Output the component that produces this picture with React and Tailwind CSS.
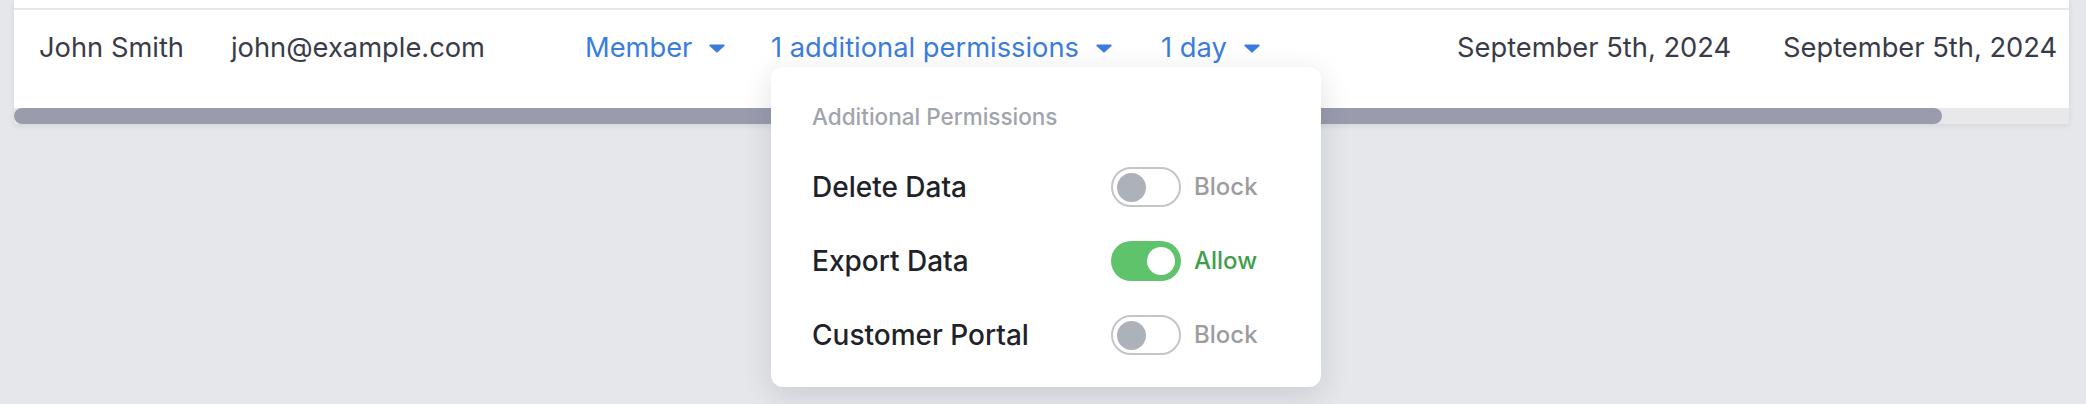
import React from 'react';

const permissions = [
  {label: 'Delete Data', on: false},
  {label: 'Export Data', on: true},
  {label: 'Customer Portal', on: false},
];

const Caret = () => (
  <svg width="16" height="9" viewBox="0 0 16 9" className="shrink-0">
    <path d="M1.2 0.5h13.6a0.9 0.9 0 0 1 0.65 1.5L8.65 8.3a0.9 0.9 0 0 1-1.3 0L0.55 2A0.9 0.9 0 0 1 1.2 0.5z" fill="currentColor"/>
  </svg>
);

const Toggle = ({on}) => (
  <div
    className={
      on
        ? 'flex h-[40px] w-[70px] shrink-0 items-center justify-end rounded-full bg-[#5ec36b] pr-[6px]'
        : 'flex h-[40px] w-[70px] shrink-0 items-center rounded-full border-2 border-[#c3c5c9] bg-white pl-[4px]'
    }
  >
    <div className={on ? 'h-[28px] w-[28px] rounded-full bg-white' : 'h-[29px] w-[29px] rounded-full bg-[#adb1b9]'}/>
  </div>
);

const Dropdown = ({children}) => (
  <div className="flex items-center gap-[17px] text-[#3b7ddd]">
    <span>{children}</span>
    <Caret/>
  </div>
);

export default function App() {
  return (
    <div className="min-h-[404px] bg-[#e5e7eb] font-['Inter',sans-serif]">
      {/* Table */}
      <div className="ml-[14px] mr-[17px] bg-white shadow-[0_2px_6px_rgba(0,0,0,0.08)]">
        <div className="h-[8px]"/>
        <div className="flex h-[78px] items-center whitespace-nowrap border-t-2 border-[#e5e7eb] text-[27.3px] leading-[32px] text-[#393c48]">
          <div className="w-[193px] shrink-0 pl-[25px]">John Smith</div>
          <div className="w-[354px] shrink-0 pl-[24px]">john@example.com</div>
          <div className="w-[186px] shrink-0 pl-[24px]">
            <Dropdown>Member</Dropdown>
          </div>
          <div className="w-[390px] shrink-0 pl-[24px]">
            <div className="relative">
              <Dropdown>1 additional permissions</Dropdown>

              {/* Permissions popover */}
              <div className="absolute left-0 top-[35px] z-10 w-[550px] rounded-[12px] bg-white px-[41px] pb-[32px] pt-[34px] shadow-[0_8px_30px_rgba(30,35,50,0.14)]">
                <div className="text-[22.5px] font-medium leading-[32px] text-[#a0a4ad]">Additional Permissions</div>
                <div className="mt-[34px] flex flex-col gap-[34px]">
                  {permissions.map((p) => (
                    <div key={p.label} className="flex h-[40px] items-center">
                      <div className="w-[299px] shrink-0 text-[28px] font-medium text-[#1f2329]">{p.label}</div>
                      <Toggle on={p.on}/>
                      <span className={p.on ? 'ml-[13px] text-[24px] font-medium text-[#3f9e4b]' : 'ml-[13px] text-[24px] font-medium text-[#9c9c9e]'}>
                        {p.on ? 'Allow' : 'Block'}
                      </span>
                    </div>
                  ))}
                </div>
              </div>
            </div>
          </div>
          <div className="w-[296px] shrink-0 pl-[24px]">
            <Dropdown>1 day</Dropdown>
          </div>
          <div className="w-[326px] shrink-0 pl-[24px]">September 5th, 2024</div>
          <div className="flex-1 pl-[24px]">September 5th, 2024</div>
        </div>
        <div className="h-[22px]"/>
        {/* Scrollbar */}
        <div className="flex h-[16px] bg-[#e8e8ea]">
          <div className="w-[1928px] rounded-full bg-[#9a9cae]"/>
        </div>
      </div>
    </div>
  );
}
